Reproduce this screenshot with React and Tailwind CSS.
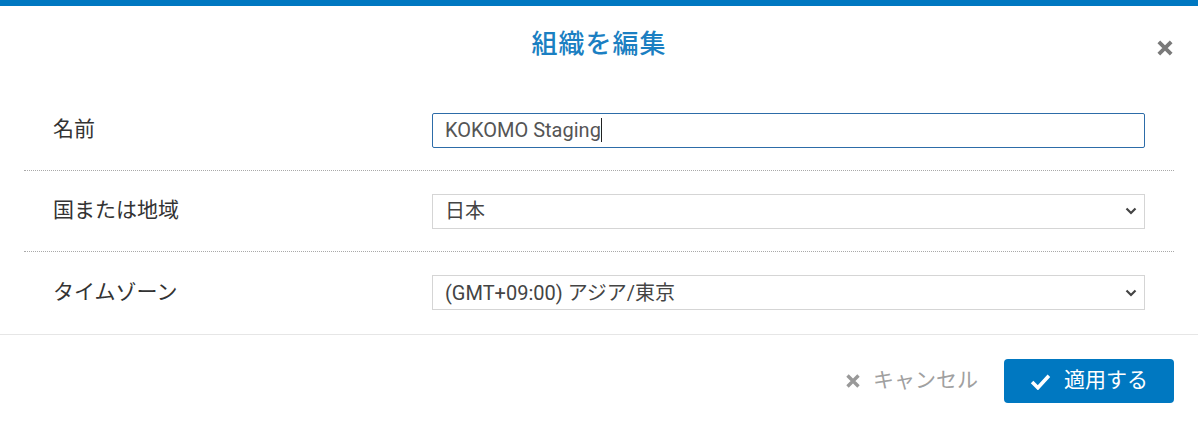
import React from 'react';

const font = { fontFamily: 'Roboto, "Noto Sans CJK JP", sans-serif' };

const Chevron = () => (
  <svg width="12" height="8" viewBox="0 0 12 8" className="shrink-0">
    <path d="M1.5 1.5 L6 6 L10.5 1.5" fill="none" stroke="#444" strokeWidth="2.2" />
  </svg>
);

const XIcon = ({ size = 16, color = '#777', w = 3.2 }) => (
  <svg width={size} height={size} viewBox="0 0 16 16" className="shrink-0">
    <path d="M2.5 2.5 L13.5 13.5 M13.5 2.5 L2.5 13.5" stroke={color} strokeWidth={w} strokeLinecap="butt" />
  </svg>
);

const Row = ({ label, children, dotted }) => (
  <div className={`flex items-center h-[81px] pl-[29px] pr-[29px] ${dotted ? 'border-b border-dotted border-[#a9a9a9]' : ''}`}>
    <div className="w-[379px] text-[21px] text-[#333]">{label}</div>
    <div className="flex-1">{children}</div>
  </div>
);

const SelectBox = ({ value }) => (
  <div className="flex items-center justify-between h-[35px] border border-[#d5d5d5] pl-[12px] pr-[7px] text-[20px] text-[#444]">
    <span>{value}</span>
    <Chevron />
  </div>
);

export default function App() {
  return (
    <div className="w-[1198px] h-[427px] bg-white border-t-[6px] border-[#0078c1] flex flex-col" style={font}>
      <div className="relative h-[84px] flex items-center justify-center">
        <h1 className="text-[26px] font-medium text-[#1b7fc2] tracking-[1px] -mt-[7px]">組織を編集</h1>
        <div className="absolute right-[24px] top-[33px]">
          <XIcon size={18} color="#7a7a7a" w={3.4} />
        </div>
      </div>
      <div className="mx-6">
        <Row label="名前" dotted>
          <div className="flex items-center h-[35px] border border-[#2d6ca8] rounded-[2px] pl-[12px] text-[20px] text-[#555]">
            <span>KOKOMO Staging</span>
            <span className="w-px h-[24px] bg-[#222]" />
          </div>
        </Row>
        <Row label="国または地域" dotted>
          <SelectBox value="日本" />
        </Row>
        <Row label="タイムゾーン">
          <SelectBox value="(GMT+09:00) アジア/東京" />
        </Row>
      </div>
      <div className="mt-px border-t border-[#e6e6e6] flex-1 flex items-center justify-end gap-[26px] pr-6">
        <button className="flex items-center gap-[12px] text-[21px] text-[#a0a0a0]">
          <XIcon size={16} color="#999" w={3.4} />
          <span>キャンセル</span>
        </button>
        <button className="flex items-center justify-center gap-[13px] w-[170px] h-[44px] rounded-[4px] bg-[#0078c1] text-white text-[21px]">
          <svg width="21" height="17" viewBox="0 0 20 16">
            <path d="M2 8.5 L7.5 14 L18 2.5" fill="none" stroke="#fff" strokeWidth="3.4" />
          </svg>
          <span>適用する</span>
        </button>
      </div>
    </div>
  );
}
